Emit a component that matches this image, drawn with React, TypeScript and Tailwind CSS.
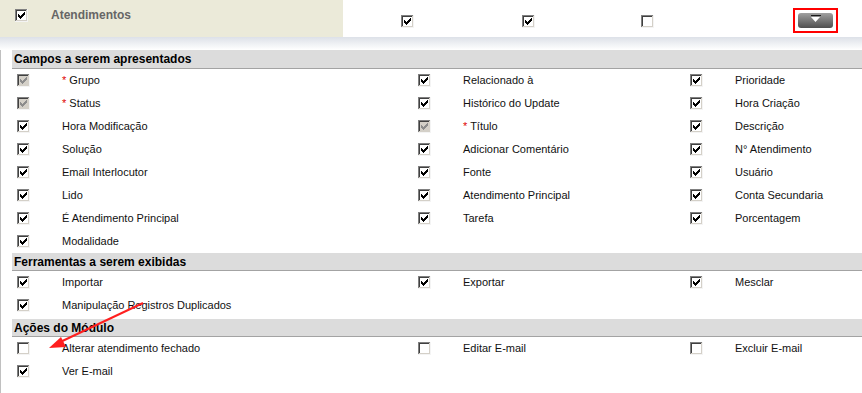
import type { ReactNode } from "react";

type Box = "on" | "off" | "locked";

// classic windows check mark, pixel runs [x, y, w] inside the 13px box
const checkRuns: [number, number, number][] = [
  [9, 3, 1],
  [8, 4, 2],
  [3, 5, 1],
  [7, 5, 3],
  [3, 6, 2],
  [6, 6, 3],
  [3, 7, 5],
  [4, 8, 3],
  [5, 9, 1],
];

function CheckBox({ state }: { state: Box }) {
  const locked = state === "locked";
  const checked = state !== "off";
  return (
    <svg width="13" height="13" viewBox="0 0 13 13" className="shrink-0" shapeRendering="crispEdges">
      <rect x="0" y="0" width="13" height="13" fill="#ffffff" />
      <rect x="2" y="2" width="9" height="9" fill={locked ? "#d4d0c8" : "#ffffff"} />
      <path d="M0 0h13v1H0z M0 0h1v13H0z" fill="#808080" />
      <path d="M1 1h11v1H1z M1 1h1v11H1z" fill="#404040" />
      <path d="M1 11h11v1H1z M11 1h1v11h-1z" fill="#d4d0c8" />
      <path d="M0 12h13v1H0z M12 0h1v13h-1z" fill="#f4f4f4" />
      {checked &&
        checkRuns.map(([x, y, w], i) => (
          <rect key={i} x={x} y={y} width={w} height="1" fill={locked ? "#8c8c8c" : "#000000"} />
        ))}
    </svg>
  );
}

type Item = { label: string; state: Box; req?: boolean };

const campos: Item[] = [
  { label: "Grupo", state: "locked", req: true },
  { label: "Relacionado à", state: "on" },
  { label: "Prioridade", state: "on" },
  { label: "Status", state: "locked", req: true },
  { label: "Histórico do Update", state: "on" },
  { label: "Hora Criação", state: "on" },
  { label: "Hora Modificação", state: "on" },
  { label: "Título", state: "locked", req: true },
  { label: "Descrição", state: "on" },
  { label: "Solução", state: "on" },
  { label: "Adicionar Comentário", state: "on" },
  { label: "N° Atendimento", state: "on" },
  { label: "Email Interlocutor", state: "on" },
  { label: "Fonte", state: "on" },
  { label: "Usuário", state: "on" },
  { label: "Lido", state: "on" },
  { label: "Atendimento Principal", state: "on" },
  { label: "Conta Secundaria", state: "on" },
  { label: "É Atendimento Principal", state: "on" },
  { label: "Tarefa", state: "on" },
  { label: "Porcentagem", state: "on" },
  { label: "Modalidade", state: "on" },
];

const ferramentas: Item[] = [
  { label: "Importar", state: "on" },
  { label: "Exportar", state: "on" },
  { label: "Mesclar", state: "on" },
  { label: "Manipulação Registros Duplicados", state: "on" },
];

const acoes: Item[] = [
  { label: "Alterar atendimento fechado", state: "off" },
  { label: "Editar E-mail", state: "off" },
  { label: "Excluir E-mail", state: "off" },
  { label: "Ver E-mail", state: "on" },
];

function Band({ children, className = "" }: { children: ReactNode; className?: string }) {
  return (
    <div
      className={`bg-[#dcdcdc] border-b border-[#a3a3a3] pl-[2px] flex items-center text-[12px] font-bold text-black ${className}`}
    >
      {children}
    </div>
  );
}

function Grid({ items }: { items: Item[] }) {
  return (
    <div className="grid grid-cols-[401px_272px_1fr]">
      {items.map((it) => (
        <div key={it.label} className="h-[23px] flex items-center">
          <div className="ml-[5px] mr-[32px] flex">
            <CheckBox state={it.state} />
          </div>
          <span className="text-[11px] text-[#111]">
            {it.req && <span className="text-[#e00000]">* </span>}
            {it.label}
          </span>
        </div>
      ))}
    </div>
  );
}

export default function App() {
  return (
    <div className="relative w-[862px] h-[393px] overflow-hidden bg-white font-['Liberation_Sans',Arial,sans-serif]">
      {/* Cabeçalho do módulo */}
      <div className="flex h-[37px]">
        <div className="w-[343px] bg-[#ebead9] flex items-start pt-[9px] pl-[15px]">
          <CheckBox state="on" />
          <span className="ml-[23px] text-[12px] font-bold text-[#666] leading-[13px]">Atendimentos</span>
        </div>
        <div className="flex-1 flex items-start pt-[15px]">
          <div className="ml-[58px] flex"><CheckBox state="on" /></div>
          <div className="ml-[108px] flex"><CheckBox state="on" /></div>
          <div className="ml-[106px] flex"><CheckBox state="off" /></div>
          <div className="ml-[139px] -mt-[7px] w-[45px] h-[25px] border-2 border-[#ff0000] flex items-center justify-center">
            <div className="w-[35px] h-[15px] rounded-[3px] bg-gradient-to-b from-[#a0a0a0] to-[#4f4f4f] flex flex-col items-center pt-[2px]">
              <div className="w-[10px] h-[1px] bg-[#1a1a1a]" />
              <svg width="9" height="5" viewBox="0 0 9 5" className="mt-[1px]">
                <path d="M0 0h9L4.5 5z" fill="#ffffff" />
              </svg>
            </div>
          </div>
        </div>
      </div>
      <div className="h-[13px] bg-gradient-to-b from-[#dde1e8] to-white" />

      {/* Corpo */}
      <div className="border-l border-[#c0c0c0] pl-[11px] h-[343px]">
        <Band className="h-[19px]">Campos a serem apresentados</Band>
        <Grid items={campos} />
        <Band className="h-[18px]">Ferramentas a serem exibidas</Band>
        <Grid items={ferramentas} />
        <Band className="h-[18px] mt-[2px]">Ações do Módulo</Band>
        <Grid items={acoes} />
      </div>

      {/* seta de destaque */}
      <svg className="absolute left-0 top-0 pointer-events-none" width="862" height="393">
        <line x1="143" y1="303" x2="56" y2="344" stroke="#ff1f1f" strokeWidth="2" />
        <path d="M49 348 L61 337 L66 347 Z" fill="#ff1f1f" />
      </svg>
    </div>
  );
}
